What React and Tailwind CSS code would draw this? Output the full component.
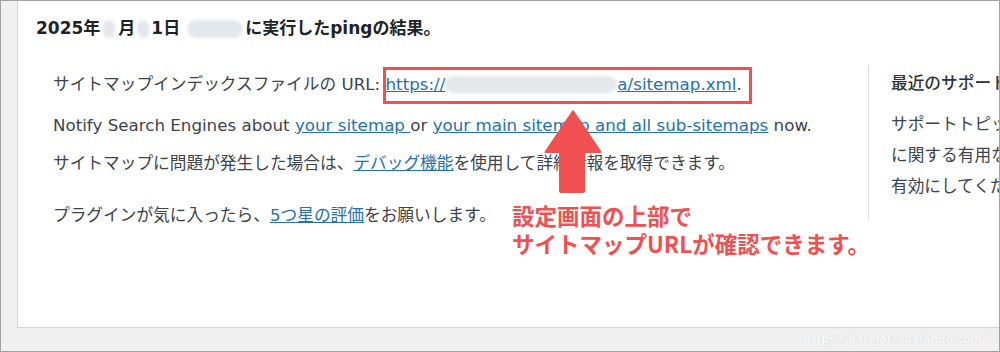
import React from "react";

const Blob = ({ w, h = 16, className = "" }) => (
  <span
    className={`inline-block align-middle rounded-full bg-[#e4e7ec] blur-[1.5px] ${className}`}
    style={{ width: w, height: h }}
  />
);

export default function App() {
  return (
    <div className="relative w-[1000px] h-[352px] overflow-hidden border border-[#a3a3a3] bg-[#f0f0f1] font-['DejaVu_Sans','Noto_Sans_CJK_JP',sans-serif]">
      <div className="ml-[16px] h-[327px] bg-white border-l border-b border-[#d6d6d8] flex flex-col overflow-hidden">
        <h2 className="pl-[18px] pt-[15px] text-[17px] leading-[24px] font-bold text-[#1d2327] whitespace-nowrap">
          2025年<Blob w={12} h={18} className="mx-[3px]" />月<Blob w={12} h={18} className="mx-[2px]" />1日
          <Blob w={56} h={18} className="ml-[7px] mr-[2px]" />に実行したpingの結果。
        </h2>
        <div className="flex mt-[32px]">
          <div className="w-[850px] shrink-0 pl-[35px] text-[16.7px] text-[#3c434a] whitespace-nowrap">
            <p className="leading-[24px]">
              サイトマップインデックスファイルの URL:{" "}
              <a className="text-[#2271b1] underline">
                https://<Blob w={172} h={17} className="-mt-[2px]" />a/sitemap.xml
              </a>
              .
            </p>
            <p className="leading-[24px] mt-[17px]">
              Notify Search Engines about{" "}
              <a className="text-[#2271b1] underline">your sitemap </a> or{" "}
              <a className="text-[#2271b1] underline">your main sitemap and all sub-sitemaps</a> now.
            </p>
            <p className="leading-[24px] mt-[14px]">
              サイトマップに問題が発生した場合は、<a className="text-[#2271b1] underline">デバッグ機能</a>を使用して詳細情報を取得できます。
            </p>
            <p className="leading-[24px] mt-[28px]">
              プラグインが気に入ったら、<a className="text-[#2271b1] underline">5つ星の評価</a>をお願いします。
            </p>
          </div>
          <div className="-mt-[7px] h-[155px] shrink-0 border-l border-[#dcdcde] pl-[22px] text-[16.7px] text-[#3c434a] whitespace-nowrap">
            <p className="pt-[6px] leading-[24px] font-medium text-[#2c3338]">最近のサポートトピック / RSS</p>
            <p className="mt-[14px] leading-[31px]">サポートトピックを表示するには</p>
            <p className="leading-[31px]">に関する有用な情報を得るため</p>
            <p className="leading-[31px]">有効にしてください。</p>
          </div>
        </div>
      </div>

      {/* red box annotation */}
      <div className="absolute left-[382px] top-[66px] w-[369px] h-[37px] border-[3px] border-[#f0504f]" />

      {/* arrow */}
      <svg className="absolute left-[540px] top-[106px]" width="64" height="90" viewBox="0 0 64 90">
        <path
          d="M31 4 Q32 2.5 33 4 L60 44 Q61 46 59 46 L44 46 L44 84 Q44 86 42 86 L20 86 Q18 86 18 84 L18 46 L5 46 Q3 46 4 44 Z"
          fill="#f0504f"
        />
      </svg>

      {/* annotation text */}
      <div className="absolute left-[511px] top-[200px] text-[22.5px] leading-[28px] font-bold text-[#f0504f] font-['Noto_Sans_CJK_JP',sans-serif] whitespace-nowrap">
        <div>設定画面の上部で</div>
        <div>サイトマップURLが確認できます。</div>
      </div>

      {/* watermark */}
      <div className="absolute left-[802px] top-[329px] text-[12px] leading-[18px] font-bold text-[#f9f9f9] [text-shadow:0_0_1px_#c4c4c4] font-['Open_Sans',sans-serif]">
        https://parejatrabajando.com/
      </div>
    </div>
  );
}
